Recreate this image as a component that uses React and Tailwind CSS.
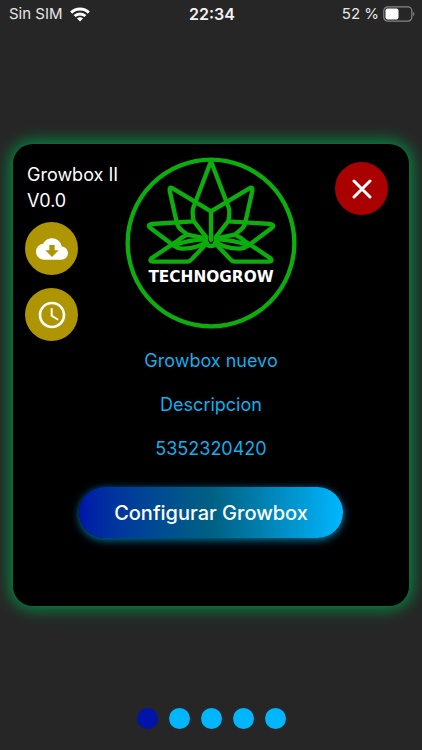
import React from "react";
import { MdCloudDownload, MdAccessTime } from "react-icons/md";

function StatusBar() {
  return (
    <header className="grid h-7 grid-cols-3 items-center pr-[7px] pl-[9px] text-[15px] text-[#e6e6e6]">
      <div className="flex items-center gap-[7px] whitespace-nowrap">
        <span>Sin SIM</span>
        <svg className="h-[15px] w-5" viewBox="0 0 20 15" fill="none" stroke="#fff" strokeWidth="3" aria-label="Wi-Fi">
          <path d="M1.2 5.6C6 .9 14 .9 18.8 5.6" />
          <path d="M4.6 9C7.6 6.2 12.4 6.2 15.4 9" />
          <path d="M7 11.4c1.6-1.6 4.4-1.6 6 0L10 14.6z" fill="#fff" stroke="none" />
        </svg>
      </div>
      <time className="text-center text-base font-semibold text-[#f2f2f2]">22:34</time>
      <div className="flex items-center justify-end gap-1 whitespace-nowrap">
        <span>52 %</span>
        <svg className="h-4 w-8" viewBox="0 0 32 16" aria-label="Battery">
          <rect x=".8" y=".8" width="28" height="14.4" rx="4" fill="none" stroke="#858585" strokeWidth="1.2" />
          <rect x="2.5" y="2.5" width="13" height="11" rx="2" fill="#fff" />
          <path d="M30.2 5.6c1.6.8 1.6 4 0 4.8z" fill="#858585" />
        </svg>
      </div>
    </header>
  );
}

function Leaves() {
  return (
    <>
      <path d="M273 34 221 170Q215 184 221 213L259 262" />
      <path d="M273 184 158 115Q147 109 149 122L169 212Q172 232 186 241L202 254 256 265" />
      <path d="M221 214 94 222Q81 225 90 233L158 284Q174 297 190 296C215 295 240 289 259 276" />
      <path d="M202 254Q184 261 172 273L94 325Q87 334 98 335H203Q210 334 218 325L261 279" />
      <path d="M257 268Q205 270 160 286" />
    </>
  );
}

function Logo() {
  return (
    <svg className="size-[172px]" viewBox="15 21 516 516" role="img" aria-label="Technogrow">
      <g fill="none" stroke="#0cad0c" strokeWidth="13" strokeLinecap="round" strokeLinejoin="round">
        <circle cx="273" cy="279" r="250" />
        <Leaves />
        <g transform="translate(546 0) scale(-1 1)">
          <Leaves />
        </g>
        <path d="M273 184V270" />
        <path d="M259 262C252 276 260 288 273 288S294 276 287 262" />
      </g>
      <text x="273" y="397" textAnchor="middle" fill="#fff" fontSize="46" className="font-['DejaVu_Sans',sans-serif] font-bold">
        TECHNOGROW
      </text>
    </svg>
  );
}

function RoundButton({ label, className, children }) {
  return (
    <button type="button" aria-label={label} className={`flex size-[53px] items-center justify-center rounded-full text-white ${className}`}>
      {children}
    </button>
  );
}

export default function App() {
  return (
    <div className="flex min-h-screen flex-col bg-[#262626] font-['Inter','Liberation_Sans',sans-serif]">
      <StatusBar />
      <main className="mx-[13px] mt-29 rounded-[20px] bg-black px-3 pt-[13px] pb-17 shadow-[0_0_16px_3px_#008f43]">
        <div className="grid grid-cols-[1fr_auto_1fr] items-start">
          <div className="pt-[5px]">
            <h1 className="pl-[2px] text-lg leading-[26px] whitespace-nowrap text-white">
              Growbox II
              <br />
              V0.0
            </h1>
            <div className="mt-2 flex flex-col gap-[13px]">
              <RoundButton label="Descargar" className="bg-[#ad9503]">
                <MdCloudDownload className="size-8" />
              </RoundButton>
              <RoundButton label="Horario" className="bg-[#ad9503]">
                <MdAccessTime className="size-8" />
              </RoundButton>
            </div>
          </div>
          <Logo />
          <div className="flex justify-end pt-[5px] pr-[9px]">
            <RoundButton label="Cerrar" className="bg-[#a90000]">
              <svg className="size-5" viewBox="0 0 20 20" fill="none" stroke="currentColor" strokeWidth="3" strokeLinecap="round">
                <path d="m2 2 16 16M18 2 2 18" />
              </svg>
            </RoundButton>
          </div>
        </div>
        <div className="mt-[6px] flex flex-col gap-4 text-center text-lg text-[#13aeec]">
          <p>Growbox nuevo</p>
          <p>Descripcion</p>
          <p>5352320420</p>
        </div>
        <button
          type="button"
          className="mx-auto mt-6 block h-[51px] w-2/3 min-w-[264px] rounded-full bg-linear-to-r from-[#0014a8] via-[#006082] to-[#00b7ff] text-xl font-medium whitespace-nowrap text-white shadow-[0_2px_8px_#007aa8]"
        >
          Configurar Growbox
        </button>
      </main>
      <nav aria-label="Páginas" className="mt-auto flex justify-center gap-[11px] pb-[21px]">
        <button type="button" aria-label="Página 1" aria-current="page" className="size-[21px] rounded-full bg-[#0014a8]" />
        {[2, 3, 4, 5].map((page) => (
          <button key={page} type="button" aria-label={`Página ${page}`} className="size-[21px] rounded-full bg-[#00b7ff]" />
        ))}
      </nav>
    </div>
  );
}
